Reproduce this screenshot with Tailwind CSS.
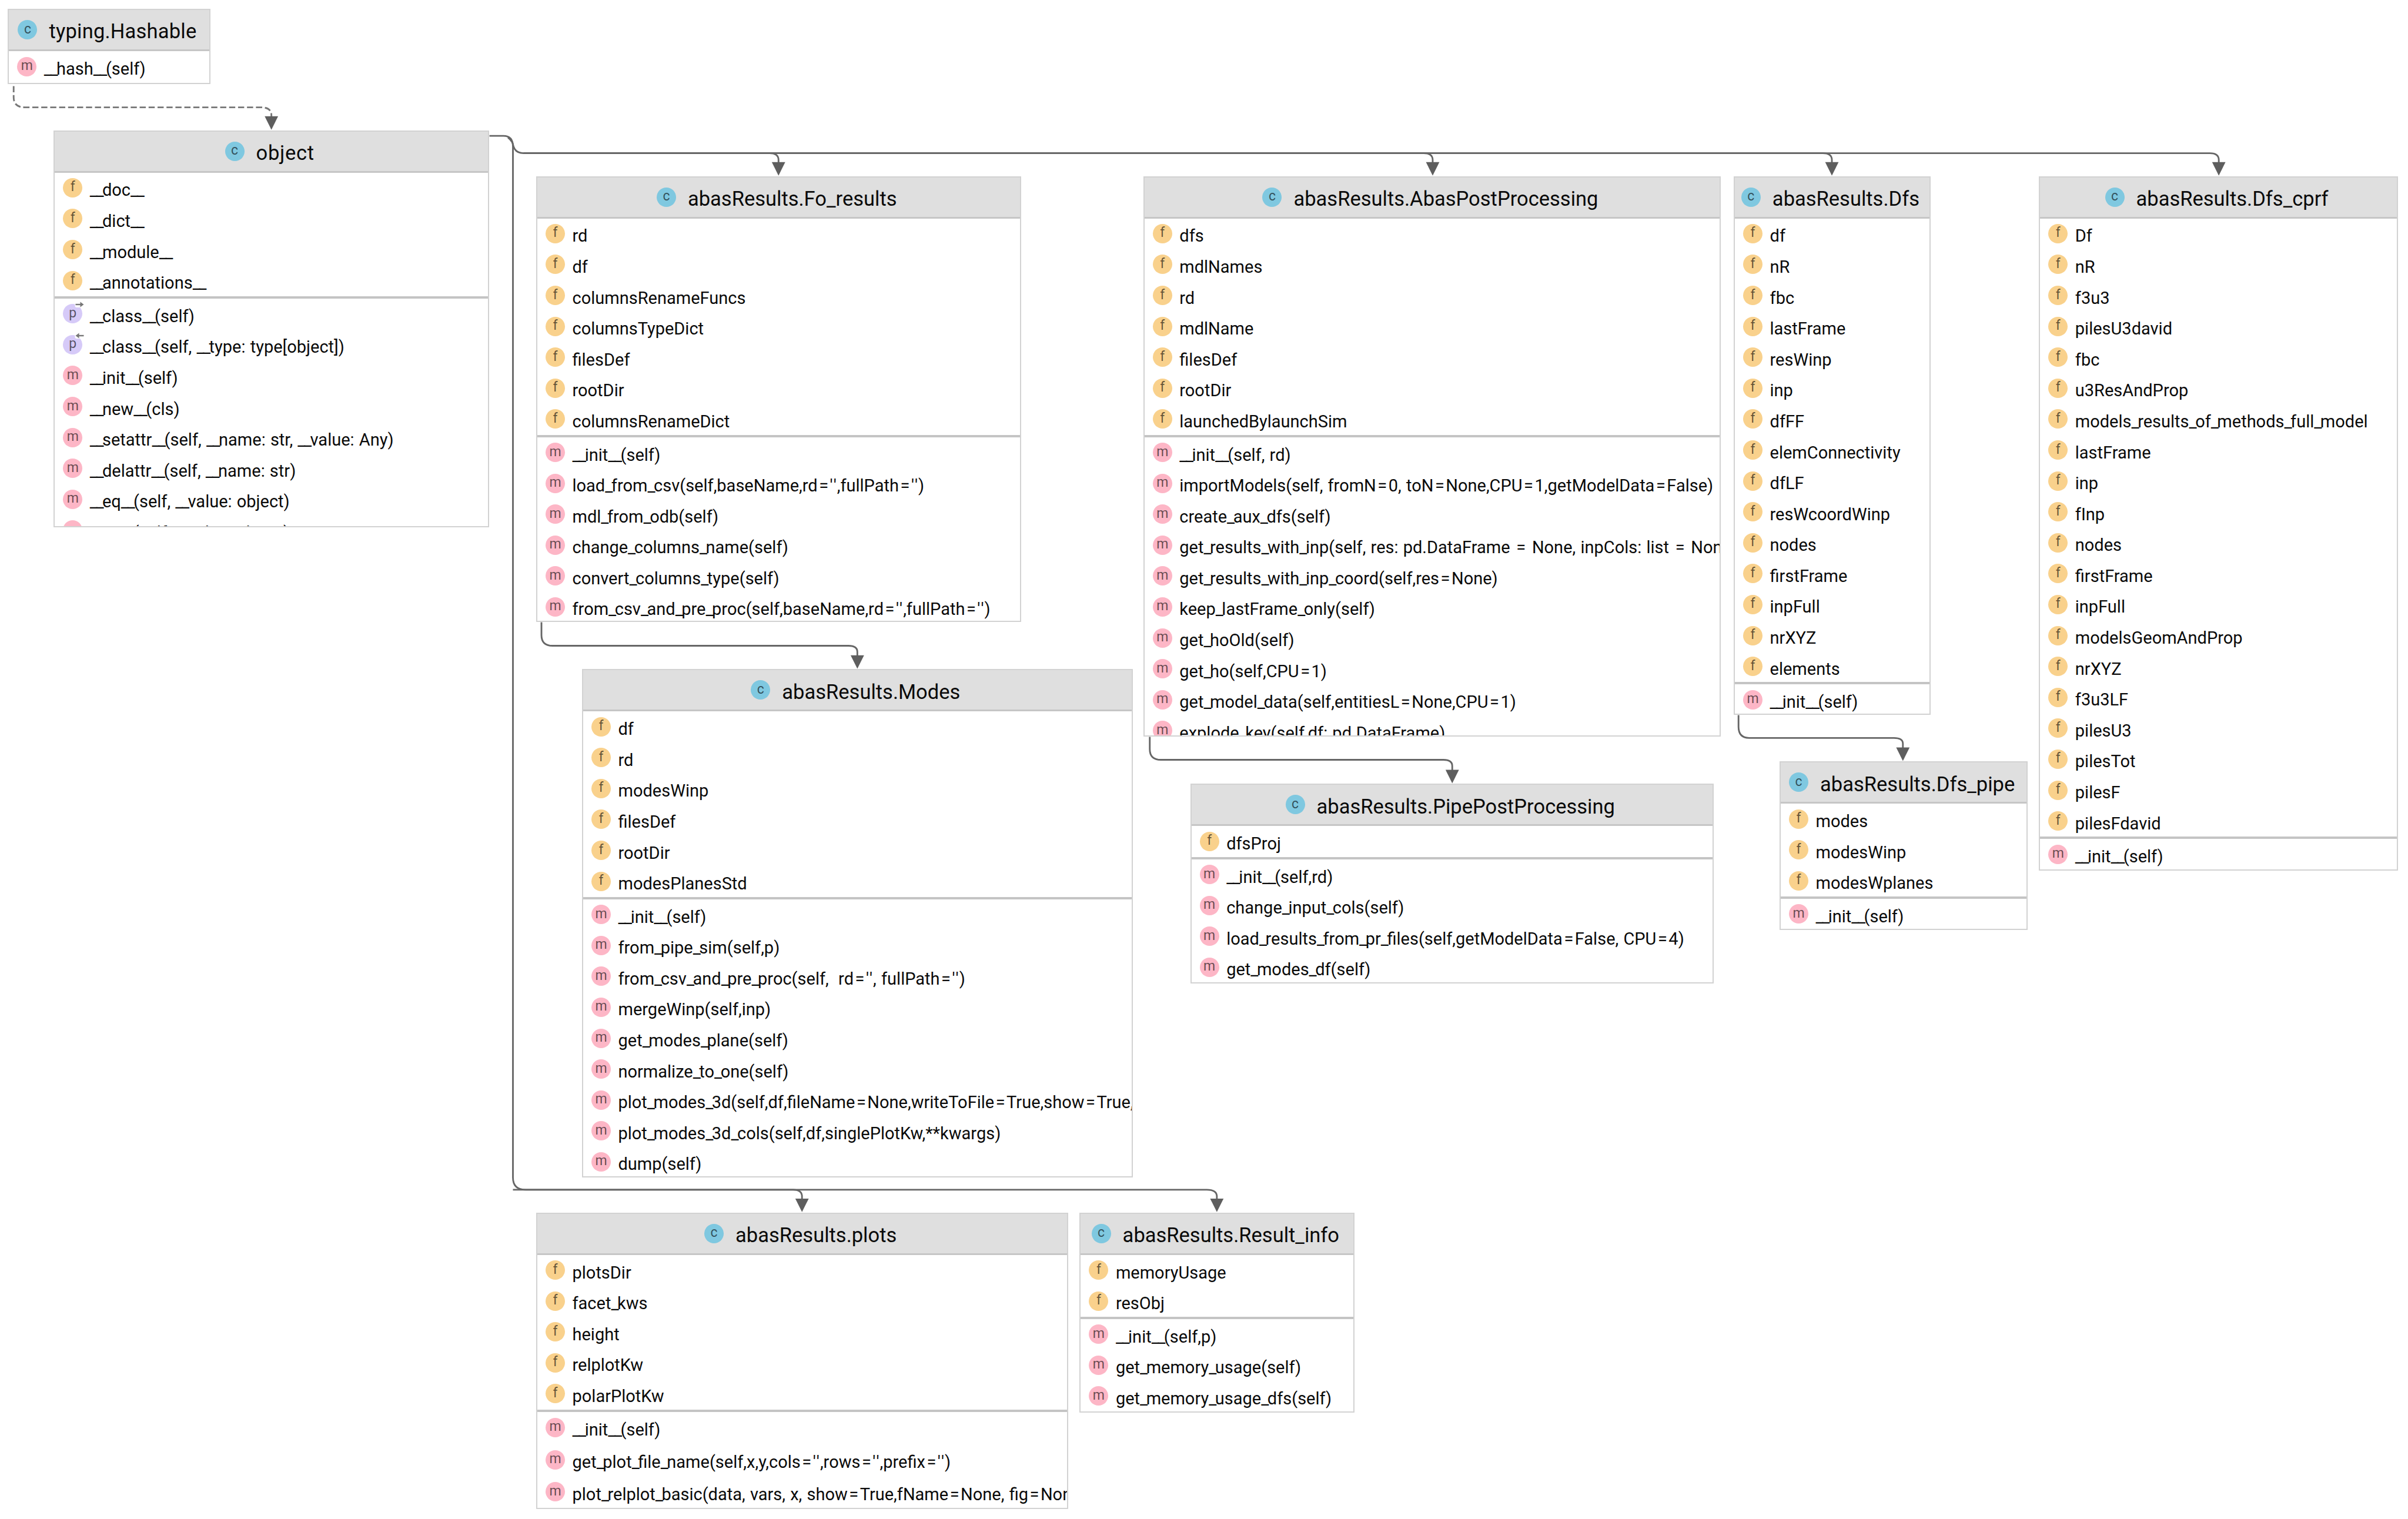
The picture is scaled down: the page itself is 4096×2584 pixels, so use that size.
<!DOCTYPE html>
<html lang="en">
  <head>
    <meta charset="UTF-8" />
    <script src="https://cdn.jsdelivr.net/npm/@tailwindcss/browser@4"></script>
    <title>abasResults class diagram</title>
  </head>
  <body class="bg-white">
    <div id="canvas" class="relative w-[4096px] h-[2584px] overflow-hidden bg-white font-['Roboto',sans-serif] text-[#0a0a0a]">
      <svg class="absolute inset-0 z-10" width="4096" height="2584" viewBox="0 0 4306 2717" fill="none">
        <g stroke="#666" stroke-width="3">
          <path d="M24 154 V174 Q24 192 44 192 H466 Q485 192 485 206 V212" stroke="#777" stroke-dasharray="11 5" />
          <path d="M875 243 H900 Q917 243 917 262 V2106 Q917 2128 940 2128 H1418 Q1434 2128 1434 2140 V2148" />
          <path d="M917 2128 H2158 Q2176 2128 2176 2140 V2148" />
          <path d="M908 246 Q917 253 918 262 Q922 274 936 274 H1376 Q1392 274 1392 286 V294" />
          <path d="M936 274 H2546 Q2562 274 2562 286 V294" />
          <path d="M936 274 H3260 Q3276 274 3276 286 V294" />
          <path d="M936 274 H3952 Q3968 274 3968 286 V294" />
          <path d="M968 1113 V1136 Q968 1155 988 1155 H1517 Q1533 1155 1533 1166 V1176" />
          <path d="M2056 1318 V1340 Q2056 1359 2076 1359 H2581 Q2597 1359 2597 1370 V1382" />
          <path d="M3109 1279 V1300 Q3109 1320 3128 1320 H3387 Q3403 1320 3403 1330 V1342" />
        </g>
        <g fill="#5e5e5e">
          <polygon points="473,208 497,208 485,232" />
          <polygon points="1380,290 1404,290 1392,314" />
          <polygon points="2550,290 2574,290 2562,314" />
          <polygon points="3264,290 3288,290 3276,314" />
          <polygon points="3956,290 3980,290 3968,314" />
          <polygon points="1521,1172 1545,1172 1533,1196" />
          <polygon points="2585,1377 2609,1377 2597,1401" />
          <polygon points="3391,1337 3415,1337 3403,1361" />
          <polygon points="1422,2144 1446,2144 1434,2168" />
          <polygon points="2164,2144 2188,2144 2176,2168" />
        </g>
      </svg>
    </div>
    <script>
      const S = 0.951;
      const initSelf = "__init__(self)";
      const nodes = [
        { t: "typing.Hashable", track: "tracking-[0.2px]", x: 14, y: 16, r: 376, b: 150, m: ["__hash__(self)"] },
        { t: "object", track: "tracking-[0.7px]", x: 96, y: 233, r: 875, b: 943,
          f: ["__doc__", "__dict__", "__module__", "__annotations__"],
          m: ["p>__class__(self)", "p<__class__(self, __type: type[object])", initSelf, "__new__(cls)", "__setattr__(self, __name: str, __value: Any)", "__delattr__(self, __name: str)", "__eq__(self, __value: object)", "__ne__(self, __value: object)"] },
        { t: "abasResults.Fo_results", x: 959, y: 315, r: 1826, b: 1113,
          f: ["rd", "df", "columnsRenameFuncs", "columnsTypeDict", "filesDef", "rootDir", "columnsRenameDict"],
          m: [initSelf, "load_from_csv(self,baseName,rd='',fullPath='')", "mdl_from_odb(self)", "change_columns_name(self)", "convert_columns_type(self)", "from_csv_and_pre_proc(self,baseName,rd='',fullPath='')"] },
        { t: "abasResults.Modes", x: 1041, y: 1197, r: 2026, b: 2106,
          f: ["df", "rd", "modesWinp", "filesDef", "rootDir", "modesPlanesStd"],
          m: [initSelf, "from_pipe_sim(self,p)", "from_csv_and_pre_proc(self,\u00a0 rd='', fullPath='')", "mergeWinp(self,inp)", "get_modes_plane(self)", "normalize_to_one(self)", "plot_modes_3d(self,df,fileName=None,writeToFile=True,show=True,", "plot_modes_3d_cols(self,df,singlePlotKw,**kwargs)", "dump(self)"] },
        { t: "abasResults.AbasPostProcessing", x: 2045, y: 315, r: 3078, b: 1318,
          f: ["dfs", "mdlNames", "rd", "mdlName", "filesDef", "rootDir", "launchedBylaunchSim"],
          m: ["__init__(self, rd)", "importModels(self, fromN=0, toN=None,CPU=1,getModelData=False)", "create_aux_dfs(self)", "get_results_with_inp(self, res: pd.DataFrame = None, inpCols: list = None)", "get_results_with_inp_coord(self,res=None)", "keep_lastFrame_only(self)", "get_hoOld(self)", "get_ho(self,CPU=1)", "get_model_data(self,entitiesL=None,CPU=1)", "explode_key(self,df: pd.DataFrame)"] },
        { t: "abasResults.Dfs", x: 3101, y: 315, r: 3453, b: 1279,
          f: ["df", "nR", "fbc", "lastFrame", "resWinp", "inp", "dfFF", "elemConnectivity", "dfLF", "resWcoordWinp", "nodes", "firstFrame", "inpFull", "nrXYZ", "elements"],
          m: [initSelf] },
        { t: "abasResults.Dfs_cprf", x: 3647, y: 315, r: 4289, b: 1557,
          f: ["Df", "nR", "f3u3", "pilesU3david", "fbc", "u3ResAndProp", "models_results_of_methods_full_model", "lastFrame", "inp", "fInp", "nodes", "firstFrame", "inpFull", "modelsGeomAndProp", "nrXYZ", "f3u3LF", "pilesU3", "pilesTot", "pilesF", "pilesFdavid"],
          m: [initSelf] },
        { t: "abasResults.PipePostProcessing", x: 2129, y: 1402, r: 3065, b: 1759,
          f: ["dfsProj"],
          m: ["__init__(self,rd)", "change_input_cols(self)", "load_results_from_pr_files(self,getModelData=False, CPU=4)", "get_modes_df(self)"] },
        { t: "abasResults.Dfs_pipe", x: 3183, y: 1362, r: 3627, b: 1663,
          f: ["modes", "modesWinp", "modesWplanes"],
          m: [initSelf] },
        { t: "abasResults.plots", x: 959, y: 2169, r: 1911, b: 2699, tall: true,
          f: ["plotsDir", "facet_kws", "height", "relplotKw", "polarPlotKw"],
          m: [initSelf, "get_plot_file_name(self,x,y,cols='',rows='',prefix='')", "plot_relplot_basic(data, vars, x, show=True,fName=None, fig=None)"] },
        { t: "abasResults.Result_info", x: 1931, y: 2169, r: 2423, b: 2527,
          f: ["memoryUsage", "resObj"],
          m: ["__init__(self,p)", "get_memory_usage(self)", "get_memory_usage_dfs(self)"] },
      ];

      function arrowIcon(dir) {
        const arrow = dir === ">"
          ? '<path d="M1 6 H10" stroke="#777" stroke-width="2.4" /><polygon points="9,1.5 15,6 9,10.5" fill="#777" />'
          : '<path d="M6 6 H15" stroke="#777" stroke-width="2.4" /><polygon points="7,1.5 1,6 7,10.5" fill="#777" />';
        return `<svg class="absolute -top-[5px] -right-[4px]" width="17" height="12" viewBox="0 0 16 12"><rect x="0" y="0" width="16" height="11" rx="3" fill="#fff" />${arrow}</svg>`;
      }

      function icon(kind, extra) {
        const colors = {
          c: "bg-[#7fc8e0]",
          f: "bg-[#f9d18c]",
          m: "bg-[#fdb6c6]",
          p: "bg-[#d6caf8]",
        };
        return `<span class="relative flex shrink-0 size-[33px] items-center justify-center rounded-full text-[23px] leading-none pb-[3px] text-black/60 ${colors[kind]}">${kind}${extra || ""}</span>`;
      }

      // the original font has narrower underscores and wider = and quotes
      const glyphs = {
        _: '<span class="-mr-[2.5px]">_</span>',
        "=": '<span class="px-[2.5px]">=</span>',
        "'": '<span class="pr-[1px]">\'</span>',
      };
      function fit(text) {
        return text.replace(/[_=']/g, (c) => glyphs[c]);
      }

      function row(kind, text, tall) {
        let extra = "";
        if (kind === "m" && text[0] === "p" && (text[1] === ">" || text[1] === "<")) {
          extra = arrowIcon(text[1]);
          text = text.slice(2);
          kind = "p";
        }
        const height = tall ? "h-[54.6px]" : "h-[52.6px]";
        return `<div class="flex items-center ${height} shrink-0 pl-[14px] gap-[12.5px] whitespace-nowrap">
          <span class="-mt-[1px]">${icon(kind, extra)}</span>
          <span class="text-[29px] leading-none pt-[8px] [word-spacing:1px]">${fit(text)}</span>
        </div>`;
      }

      const canvas = document.getElementById("canvas");
      nodes.forEach((n) => {
        const box = document.createElement("div");
        box.className = "absolute flex flex-col overflow-hidden bg-white border-2 border-[#d2d2d2]";
        box.style.left = n.x * S + "px";
        box.style.top = n.y * S + "px";
        box.style.width = (n.r - n.x) * S + "px";
        box.style.height = (n.b - n.y) * S + "px";
        const fields = (n.f || []).map((f) => row("f", f)).join("");
        const methods = n.m.map((m) => row("m", m, n.tall)).join("");
        const sep = n.f ? '<div class="h-[4px] shrink-0 bg-[#c4c4c4]"></div>' : "";
        box.innerHTML = `<div class="flex items-center justify-center gap-[20px] h-[70px] shrink-0 pr-[6px] whitespace-nowrap bg-[#dfdfdf] border-b-[3px] border-[#c6c6c6]">
            ${icon("c")}
            <span class="text-[34.5px] leading-none pt-[6px] ${n.track || ""}">${n.t}</span>
          </div>
          ${fields}${sep}${methods}`;
        canvas.appendChild(box);
      });
    </script>
  </body>
</html>
